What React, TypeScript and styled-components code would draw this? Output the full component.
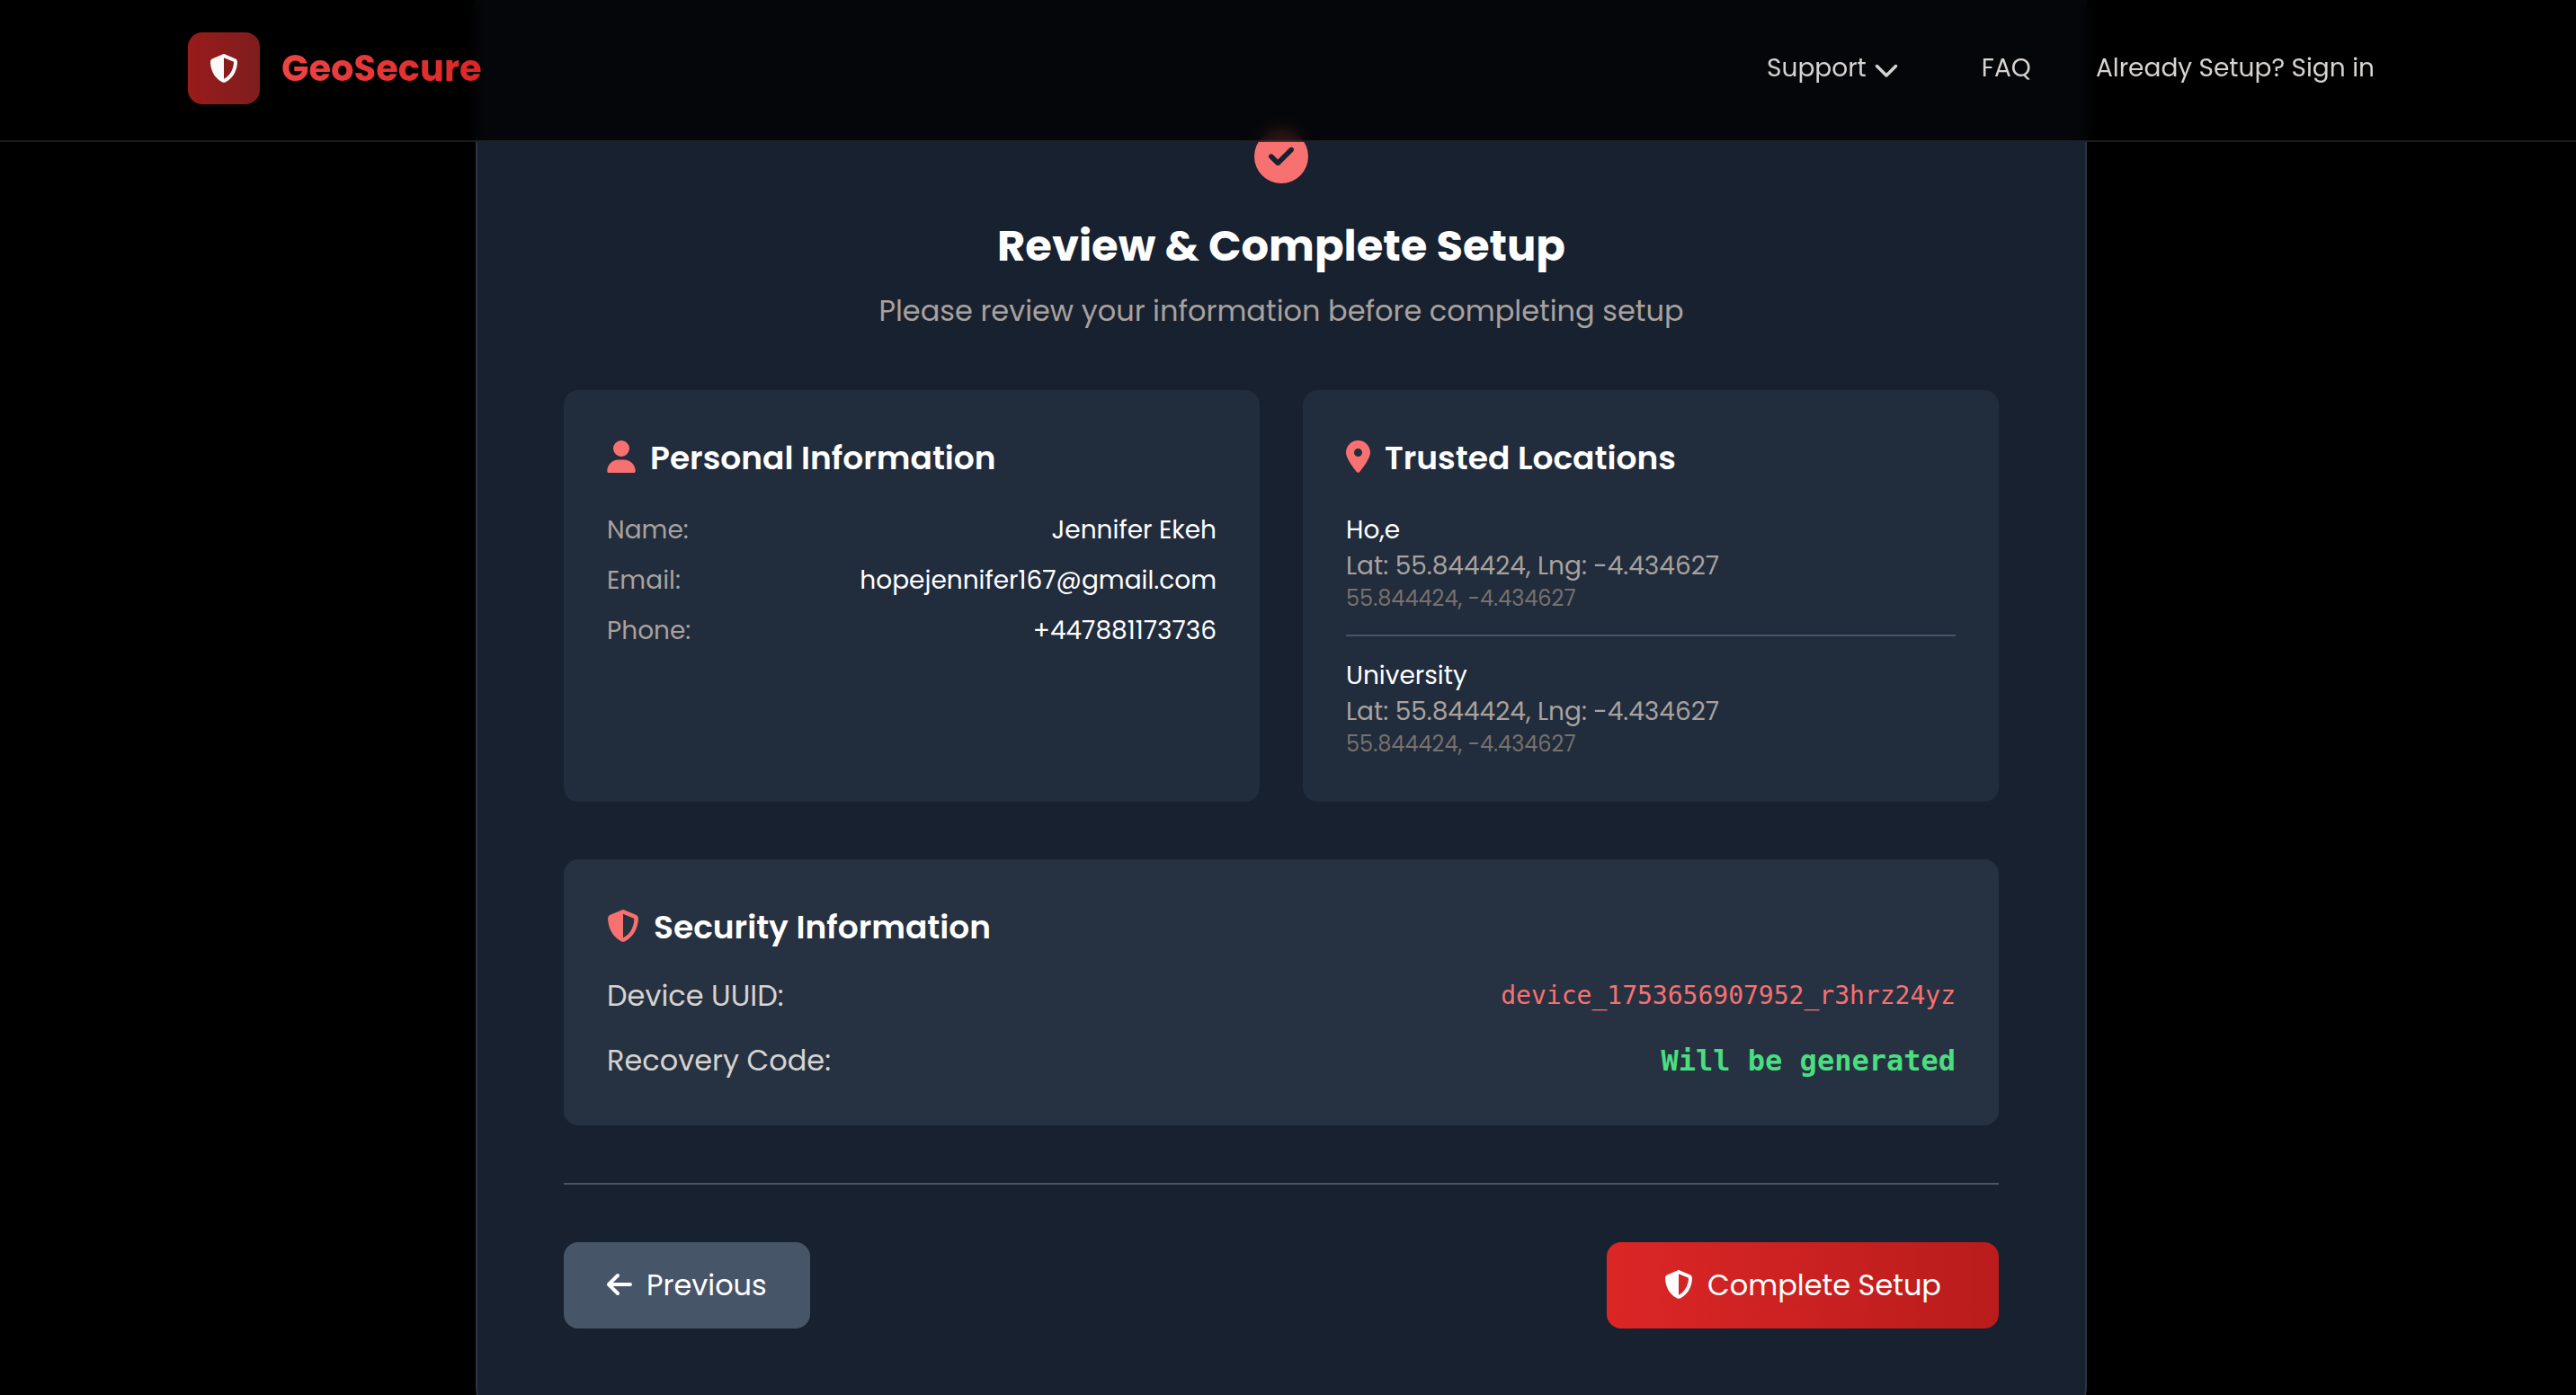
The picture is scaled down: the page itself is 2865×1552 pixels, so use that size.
import React from 'react';
import styled, { createGlobalStyle, css } from 'styled-components';
import {
  FaArrowLeft,
  FaChevronDown,
  FaCircleCheck,
  FaLocationDot,
  FaShieldHalved,
  FaUser,
} from 'react-icons/fa6';

const color = {
  card: '#18212f',
  cardBorder: '#2c3541',
  panel: '#212c3c',
  panelStrong: '#263241',
  line: '#475569',
  text: '#ffffff',
  soft: '#d6d3d1',
  muted: '#a8a29e',
  faint: '#78716c',
  accent: '#f87171',
  success: '#4ade80',
};

const GlobalStyle = createGlobalStyle`
  *, *::before, *::after { box-sizing: border-box; }
  body {
    margin: 0;
    background: #000;
    color: ${color.text};
    font-family: Poppins, Inter, "Open Sans", sans-serif;
    font-size: 32px;
    line-height: 48px;
  }
  h1, h2, p, dl, dt, dd, ul { margin: 0; padding: 0; }
`;

const Page = styled.div`
  height: 100vh;
  overflow: hidden;
`;

const Header = styled.header`
  position: fixed;
  inset: 0 0 auto 0;
  z-index: 10;
  padding-right: 15px;
  background: rgba(0, 0, 0, 0.8);
  backdrop-filter: blur(8px);
  border-bottom: 2px solid rgba(255, 255, 255, 0.1);
`;

const HeaderInner = styled.div`
  display: flex;
  align-items: center;
  justify-content: space-between;
  max-width: 2560px;
  margin: 0 auto;
  padding: 36px 64px 40px;
`;

const Brand = styled.a`
  display: flex;
  align-items: center;
  gap: 24px;
  text-decoration: none;
`;

const BrandMark = styled.span`
  display: grid;
  place-items: center;
  width: 80px;
  height: 80px;
  border-radius: 16px;
  background: linear-gradient(to right, #991b1b, #7f1d1d);
  color: #fafaf9;
`;

const BrandName = styled.span`
  font-size: 40px;
  line-height: 56px;
  font-weight: 700;
  color: transparent;
  background: linear-gradient(to right, #ef4444, #dc2626);
  background-clip: text;
`;

const Nav = styled.nav`
  display: flex;
  align-items: center;
  gap: 72px;
`;

const navText = css`
  font-size: 28px;
  line-height: 40px;
  color: ${color.soft};
`;

const NavLink = styled.a`
  ${navText}
  text-decoration: none;
`;

const NavMenu = styled.button`
  ${navText}
  padding: 0 20px 0 0;
  border: 0;
  background: none;
  font-family: inherit;
  cursor: pointer;

  svg {
    margin-left: 8px;
    vertical-align: -6px;
  }
`;

const Main = styled.main`
  padding-right: 15px;
`;

const Card = styled.section`
  max-width: 1792px;
  margin: -32px auto 0;
  padding: 174px 96px 96px;
  border: 2px solid ${color.cardBorder};
  border-radius: 32px;
  background: ${color.card};
`;

const Intro = styled.div`
  display: flex;
  flex-direction: column;
  align-items: center;
  margin-bottom: 64px;
  text-align: center;

  svg {
    margin-bottom: 38px;
    color: ${color.accent};
  }
`;

const Title = styled.h1`
  margin-bottom: 16px;
  font-size: 48px;
  line-height: 64px;
  font-weight: 700;
`;

const Subtitle = styled.p`
  color: ${color.muted};
`;

const Columns = styled.div`
  display: grid;
  grid-template-columns: repeat(2, minmax(0, 1fr));
  gap: 48px;
  margin-bottom: 64px;
`;

const Panel = styled.section<{ $strong?: boolean }>`
  padding: 48px;
  border-radius: 16px;
  background: ${p => (p.$strong ? color.panelStrong : color.panel)};
`;

const PanelTitle = styled.h2<{ $space: number }>`
  margin-bottom: ${p => p.$space}px;
  font-size: 36px;
  line-height: 56px;
  font-weight: 600;
`;

const Glyph = styled.span<{ $width: number; $tint?: string }>`
  display: inline-block;
  width: ${p => p.$width}px;
  margin-right: 16px;
  color: ${p => p.$tint || 'inherit'};
  line-height: 1;
  vertical-align: -4px;

  svg {
    display: block;
    width: 100%;
    height: 1em;
  }
`;

const Details = styled.dl<{ $gap: number }>`
  display: flex;
  flex-direction: column;
  gap: ${p => p.$gap}px;
`;

const Detail = styled.div<{ $small?: boolean }>`
  display: flex;
  align-items: center;
  justify-content: space-between;
  font-size: ${p => (p.$small ? 28 : 32)}px;
  line-height: ${p => (p.$small ? 40 : 48)}px;

  dt {
    color: ${p => (p.$small ? color.muted : color.soft)};
  }
`;

const Code = styled.dd<{ $ready?: boolean }>`
  font-family: "DejaVu Sans Mono", monospace;
  font-size: ${p => (p.$ready ? 32 : 28)}px;
  line-height: ${p => (p.$ready ? 48 : 40)}px;
  font-weight: ${p => (p.$ready ? 700 : 400)};
  color: ${p => (p.$ready ? color.success : color.accent)};
`;

const Places = styled.ul`
  list-style: none;
`;

const Place = styled.li`
  font-size: 28px;
  line-height: 40px;

  & + & {
    margin-top: 24px;
    padding-top: 24px;
    border-top: 2px solid ${color.line};
  }
`;

const PlaceAddress = styled.p`
  color: ${color.muted};
`;

const PlaceCoords = styled.p`
  font-size: 24px;
  line-height: 32px;
  color: ${color.faint};
`;

const Actions = styled.div`
  display: flex;
  justify-content: space-between;
  margin-top: 64px;
  padding-top: 64px;
  border-top: 2px solid ${color.line};
`;

const Button = styled.button<{ $primary?: boolean }>`
  padding: 24px ${p => (p.$primary ? 64 : 48)}px;
  border: 0;
  border-radius: 16px;
  background: ${p => (p.$primary ? 'linear-gradient(to right, #dc2626, #b91c1c)' : color.line)};
  color: ${color.text};
  font: inherit;
  cursor: pointer;
`;

const person = [
  ['Name:', 'Jennifer Ekeh'],
  ['Email:', 'hopejennifer167@gmail.com'],
  ['Phone:', '+447881173736'],
];

const places = [
  { name: 'Ho,e', lat: '55.844424', lng: '-4.434627' },
  { name: 'University', lat: '55.844424', lng: '-4.434627' },
];

export default function App() {
  return (
    <Page>
      <GlobalStyle />
      <Header>
        <HeaderInner>
          <Brand href="#home">
            <BrandMark>
              <FaShieldHalved size={32} />
            </BrandMark>
            <BrandName>GeoSecure</BrandName>
          </Brand>
          <Nav>
            <NavMenu type="button">
              Support
              <FaChevronDown size={28} />
            </NavMenu>
            <NavLink href="#faq">FAQ</NavLink>
            <NavLink href="#signin">Already Setup? Sign in</NavLink>
          </Nav>
        </HeaderInner>
      </Header>
      <Main>
        <Card>
          <Intro>
            <FaCircleCheck size={60} />
            <Title>Review &amp; Complete Setup</Title>
            <Subtitle>Please review your information before completing setup</Subtitle>
          </Intro>
          <Columns>
            <Panel>
              <PanelTitle $space={32}>
                <Glyph $width={32} $tint={color.accent}>
                  <FaUser />
                </Glyph>
                Personal Information
              </PanelTitle>
              <Details $gap={16}>
                {person.map(([label, value]) => (
                  <Detail $small key={label}>
                    <dt>{label}</dt>
                    <dd>{value}</dd>
                  </Detail>
                ))}
              </Details>
            </Panel>
            <Panel>
              <PanelTitle $space={32}>
                <Glyph $width={27} $tint={color.accent}>
                  <FaLocationDot />
                </Glyph>
                Trusted Locations
              </PanelTitle>
              <Places>
                {places.map(place => (
                  <Place key={place.name}>
                    <p>{place.name}</p>
                    <PlaceAddress>{`Lat: ${place.lat}, Lng: ${place.lng}`}</PlaceAddress>
                    <PlaceCoords>{`${place.lat}, ${place.lng}`}</PlaceCoords>
                  </Place>
                ))}
              </Places>
            </Panel>
          </Columns>
          <Panel $strong>
            <PanelTitle $space={24}>
              <Glyph $width={36} $tint={color.accent}>
                <FaShieldHalved />
              </Glyph>
              Security Information
            </PanelTitle>
            <Details $gap={24}>
              <Detail>
                <dt>Device UUID:</dt>
                <Code>device_1753656907952_r3hrz24yz</Code>
              </Detail>
              <Detail>
                <dt>Recovery Code:</dt>
                <Code $ready>Will be generated</Code>
              </Detail>
            </Details>
          </Panel>
          <Actions>
            <Button type="button">
              <Glyph $width={28}>
                <FaArrowLeft />
              </Glyph>
              Previous
            </Button>
            <Button type="button" $primary>
              <Glyph $width={32}>
                <FaShieldHalved />
              </Glyph>
              Complete Setup
            </Button>
          </Actions>
        </Card>
      </Main>
    </Page>
  );
}
